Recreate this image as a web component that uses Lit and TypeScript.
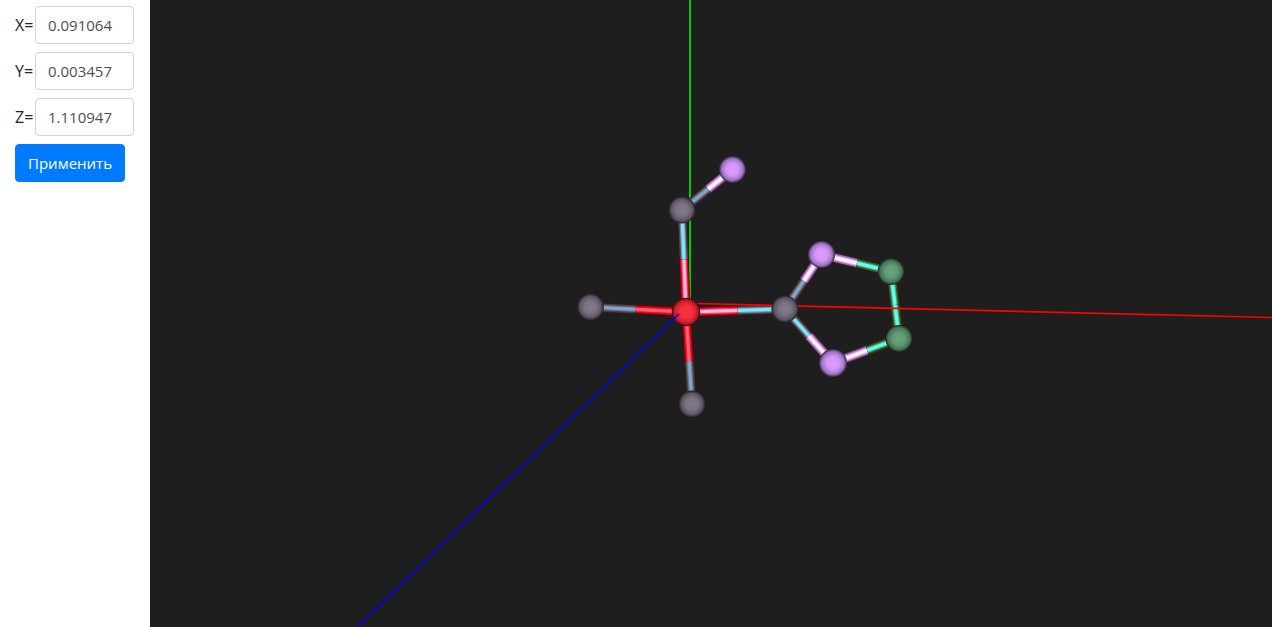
import { LitElement, html, svg, css } from "lit";
import { customElement, state } from "lit/decorators.js";

type Kind = "metal" | "carbon" | "nitrogen" | "ring";
interface Atom { x: number; y: number; kind: Kind; r: number; }
// A bond half is shaded across its width: rim, body, inner body, highlight.
type Shade = [string, string, string, string];
interface Bond { from: number; to: number; a: Shade; b: Shade; split: number; }

const ATOMS: Atom[] = [
  { x: 536, y: 312, kind: "metal", r: 14.3 },
  { x: 532, y: 210, kind: "carbon", r: 13.6 },
  { x: 582.5, y: 169.5, kind: "nitrogen", r: 13.4 },
  { x: 440.5, y: 307, kind: "carbon", r: 13.4 },
  { x: 542, y: 404, kind: "carbon", r: 13.4 },
  { x: 635, y: 309, kind: "carbon", r: 13.6 },
  { x: 671.5, y: 254.5, kind: "nitrogen", r: 13.6 },
  { x: 741, y: 271.5, kind: "ring", r: 13.4 },
  { x: 749, y: 338.5, kind: "ring", r: 13.6 },
  { x: 683, y: 363, kind: "nitrogen", r: 14 },
];

const RED: Shade = ["#5a0006", "#c80010", "#ec1428", "#ff6078"];
const RED_BRIGHT: Shade = ["#66000a", "#d80014", "#f04468", "#ffb8e4"];
const GREY: Shade = ["#302022", "#583c3e", "#746c78", "#78a8d0"];
const GREY_BRIGHT: Shade = ["#302022", "#5c4042", "#7090a4", "#7ce6ff"];
const VIOLET: Shade = ["#58305a", "#b468b4", "#e2b0ee", "#f4f4ff"];
const GREEN: Shade = ["#2c3010", "#465420", "#48b084", "#5cfff4"];

const BONDS: Bond[] = [
  { from: 1, to: 2, a: GREY, b: VIOLET, split: 0.52 },
  { from: 3, to: 0, a: GREY, b: RED, split: 0.475 },
  { from: 4, to: 0, a: GREY, b: RED, split: 0.467 },
  { from: 1, to: 0, a: GREY_BRIGHT, b: RED_BRIGHT, split: 0.485 },
  { from: 5, to: 0, a: GREY_BRIGHT, b: RED_BRIGHT, split: 0.48 },
  { from: 5, to: 6, a: GREY, b: VIOLET, split: 0.52 },
  { from: 6, to: 7, a: VIOLET, b: GREEN, split: 0.51 },
  { from: 7, to: 8, a: GREEN, b: GREEN, split: 0.5 },
  { from: 5, to: 9, a: GREY_BRIGHT, b: VIOLET, split: 0.5 },
  { from: 9, to: 8, a: VIOLET, b: GREEN, split: 0.52 },
];

const SPHERES: Record<Kind, string[]> = {
  metal: ["#ff303f", "#f82c3a", "#c01e2a", "#3c0a0e"],
  carbon: ["#83798d", "#7b7284", "#5c5463", "#211e23"],
  nitrogen: ["#dc9cff", "#d296fc", "#a274c4", "#352541"],
  ring: ["#66a67c", "#609c74", "#487658", "#18251c"],
};

@customElement("molecule-view")
class MoleculeView extends LitElement {
  static styles = css`
    :host { display: block; background: #1e1e1e; overflow: hidden; }
    .scene { display: block; width: 100%; height: 100%; }
  `;

  private half(x1: number, y1: number, x2: number, y2: number, shade: Shade) {
    return [9.5, 8, 5.5, 3.2].map((w, i) => svg`
      <line x1=${x1} y1=${y1} x2=${x2} y2=${y2} stroke=${shade[i]} stroke-width=${w} />`);
  }

  private bond({ from, to, a, b, split }: Bond) {
    const p = ATOMS[from];
    const q = ATOMS[to];
    const mx = p.x + (q.x - p.x) * split;
    const my = p.y + (q.y - p.y) * split;
    return svg`${this.half(p.x, p.y, mx, my, a)}${this.half(mx, my, q.x, q.y, b)}`;
  }

  render() {
    return html`
      <svg class="scene" viewBox="0 0 1122 627" preserveAspectRatio="xMidYMid slice" role="img" aria-label="3D">
        <defs>
          ${Object.entries(SPHERES).map(([kind, c]) => svg`
            <radialGradient id=${kind}>
              <stop offset="0" stop-color=${c[0]} />
              <stop offset="0.45" stop-color=${c[1]} />
              <stop offset="0.8" stop-color=${c[2]} />
              <stop offset="1" stop-color=${c[3]} />
            </radialGradient>`)}
        </defs>
        <line x1="540" y1="0" x2="540" y2="298" stroke="#00cc00" stroke-width="2" />
        ${BONDS.map((b) => this.bond(b))}
        <line x1="546" y1="303.5" x2="1122" y2="317.5" stroke="#ff0000" stroke-width="1.7" />
        ${ATOMS.map((a) => svg`<circle cx=${a.x} cy=${a.y} r=${a.r} fill="url(#${a.kind})" />`)}
        <line x1="529" y1="314" x2="207" y2="627" stroke="#0000f0" stroke-width="1.6" />
      </svg>`;
  }
}

@customElement("app-root")
class AppRoot extends LitElement {
  static styles = css`
    :host {
      display: flex;
      height: 100vh;
      background: #fff;
      color: #212529;
      font: 15px/24px "Open Sans", "Noto Sans", sans-serif;
    }
    .panel {
      box-sizing: border-box;
      flex: none;
      width: 150px;
      padding: 6px 16px 6px 15px;
      display: flex;
      flex-direction: column;
      align-items: flex-start;
      gap: 8px;
    }
    .row { display: flex; align-items: center; width: 100%; }
    .name { flex: none; width: 20px; font-size: 16px; white-space: nowrap; }
    .field {
      box-sizing: border-box;
      flex: 1;
      min-width: 0;
      height: 38px;
      padding: 6px 12px;
      border: 1px solid #ced4da;
      border-radius: 4px;
      background: #fff;
      color: #495057;
      font: inherit;
    }
    .apply {
      height: 38px;
      padding: 6px 12px;
      border: 1px solid #007bff;
      border-radius: 4px;
      background: #007bff;
      color: #fff;
      font: inherit;
      white-space: nowrap;
      cursor: pointer;
    }
    .view { flex: 1; min-width: 0; }
  `;

  @state() private values: Record<string, string> = { X: "0.091064", Y: "0.003457", Z: "1.110947" };

  private edit(axis: string, e: Event) {
    this.values = { ...this.values, [axis]: (e.target as HTMLInputElement).value };
  }

  render() {
    return html`
      <form class="panel" @submit=${(e: Event) => e.preventDefault()}>
        ${Object.entries(this.values).map(([axis, value]) => html`
          <div class="row">
            <label class="name" for=${axis}>${axis}=</label>
            <input class="field" id=${axis} type="text" .value=${value} @input=${(e: Event) => this.edit(axis, e)} />
          </div>`)}
        <button class="apply" type="submit">Применить</button>
      </form>
      <molecule-view class="view"></molecule-view>`;
  }
}
